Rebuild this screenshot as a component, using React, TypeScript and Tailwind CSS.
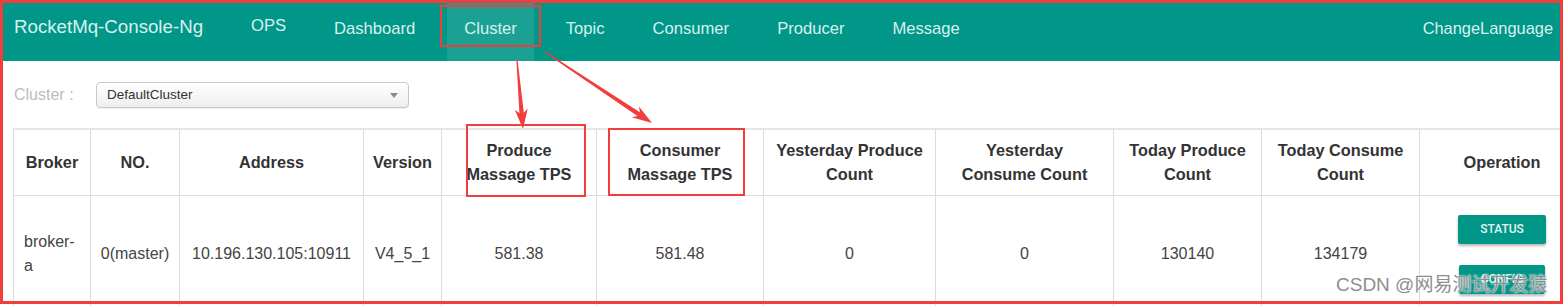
import React from 'react';

const RED = '#f23d3d';

const navItems = [
  { label: 'Dashboard', active: false },
  { label: 'Cluster', active: true },
  { label: 'Topic', active: false },
  { label: 'Consumer', active: false },
  { label: 'Producer', active: false },
  { label: 'Message', active: false },
];

const arrowPoints = (sx: number, sy: number, tx: number, ty: number) => {
  const len = Math.hypot(tx - sx, ty - sy);
  const ux = (tx - sx) / len;
  const uy = (ty - sy) / len;
  const nx = -uy;
  const ny = ux;
  const head = 20;
  const hw = 6.5;
  const bx = tx - ux * head;
  const by = ty - uy * head;
  const jx = bx + ux * 4;
  const jy = by + uy * 4;
  const pts = [
    [sx + nx * 0.6, sy + ny * 0.6],
    [jx + nx * 2.2, jy + ny * 2.2],
    [bx + nx * hw, by + ny * hw],
    [tx, ty],
    [bx - nx * hw, by - ny * hw],
    [jx - nx * 2.2, jy - ny * 2.2],
    [sx - nx * 0.6, sy - ny * 0.6],
  ];
  return pts.map((p) => p.join(',')).join(' ');
};

const Navbar = () => (
  <nav className="flex h-[61px] w-full bg-[#009688] text-[#d9f1ee]">
    <div className="pl-[14px] pt-[17px] text-[18.7px] leading-[20px] whitespace-nowrap">
      RocketMq-Console-Ng
    </div>
    <ul className="ml-[32px] flex gap-[16px]">
      <li className="px-[16px] pt-[16px] text-[16.6px] leading-[20px]">OPS</li>
      {navItems.map((item) => (
        <li
          key={item.label}
          className={
            item.active
              ? 'h-full bg-white/10 px-[17px] pt-[19px] text-[16.6px] leading-[20px]'
              : 'h-full px-[16px] pt-[19px] text-[16.6px] leading-[20px]'
          }
        >
          {item.label}
        </li>
      ))}
    </ul>
    <div className="ml-auto pr-[10px] pt-[18px] text-[16.4px] leading-[20px]">ChangeLanguage</div>
  </nav>
);

const ClusterSelect = () => (
  <div className="mt-[21px] flex items-center">
    <span className="w-[96px] pl-[14px] text-[16px] text-[#bdbdbd]">Cluster :</span>
    <div className="flex h-[26px] w-[313px] items-center justify-between rounded-[4px] border border-[#c8c8c8] bg-linear-to-b from-white to-[#eeeeee] pl-[10px] pr-[10px] shadow-[0_1px_1px_rgba(0,0,0,0.06)]">
      <span className="text-[13.5px] text-[#333]">DefaultCluster</span>
      <svg width="8" height="5" viewBox="0 0 8 5">
        <polygon points="0,0 8,0 4,5" fill="#8a8a8a" />
      </svg>
    </div>
  </div>
);

const Btn = ({ label }: { label: string }) => (
  <button className="h-[29px] rounded-[2px] bg-[#009688] px-[22px] font-['Roboto',sans-serif] text-[12px] font-medium text-[#e6f5f3] shadow-[0_2px_3px_rgba(0,0,0,0.28)]">
    {label}
  </button>
);

const ClusterTable = () => {
  const th = 'border border-[#dddddd] px-[8px] text-center align-middle font-bold text-[16.3px] leading-[24px] text-[#333]';
  const td = 'border border-[#dddddd] px-[8px] text-center align-middle text-[16px] leading-[24px] text-[#444]';
  return (
    <div className="mt-[20px] w-full overflow-hidden pl-[13px]">
      <table className="w-[1571px] table-fixed border-collapse border-t-2 border-[#e6e6e6]">
        <colgroup>
          <col className="w-[77px]" />
          <col className="w-[89px]" />
          <col className="w-[184px]" />
          <col className="w-[78px]" />
          <col className="w-[155px]" />
          <col className="w-[167px]" />
          <col className="w-[172px]" />
          <col className="w-[178px]" />
          <col className="w-[148px]" />
          <col className="w-[158px]" />
          <col className="w-[165px]" />
        </colgroup>
        <thead>
          <tr className="h-[66px]">
            <th className={th}>Broker</th>
            <th className={th}>NO.</th>
            <th className={th}>Address</th>
            <th className={th}>Version</th>
            <th className={th}>Produce<br />Massage TPS</th>
            <th className={th}>Consumer<br />Massage TPS</th>
            <th className={th}>Yesterday Produce<br />Count</th>
            <th className={th}>Yesterday<br />Consume Count</th>
            <th className={th}>Today Produce<br />Count</th>
            <th className={th}>Today Consume<br />Count</th>
            <th className={th}>Operation</th>
          </tr>
        </thead>
        <tbody>
          <tr>
            <td className="border border-[#dddddd] pl-[10px] text-left align-middle text-[16px] leading-[24px] text-[#444]">
              broker-<br />a
            </td>
            <td className={td}>0(master)</td>
            <td className={td}>10.196.130.105:10911</td>
            <td className={td}>V4_5_1</td>
            <td className={td}>581.38</td>
            <td className={td}>581.48</td>
            <td className={td}>0</td>
            <td className={td}>0</td>
            <td className={td}>130140</td>
            <td className={td}>134179</td>
            <td className="border border-[#dddddd] align-middle">
              <div className="flex flex-col items-center gap-[21px] py-[19px]">
                <Btn label="STATUS" />
                <Btn label="CONFIG" />
              </div>
            </td>
          </tr>
        </tbody>
      </table>
    </div>
  );
};

const Annotations = () => (
  <svg
    className="pointer-events-none absolute left-0 top-0"
    width="1563"
    height="306"
    viewBox="0 0 1563 306"
  >
    <rect x="1.5" y="1.5" width="1560" height="301" fill="none" stroke={RED} strokeWidth="3" />
    <rect x="441" y="6" width="99" height="40" fill="none" stroke={RED} strokeWidth="2" />
    <rect x="467" y="125" width="118" height="71" fill="none" stroke={RED} strokeWidth="2" />
    <rect x="609" y="129" width="135" height="66" fill="none" stroke={RED} strokeWidth="2" />
    <polygon points={arrowPoints(517, 60, 523, 129)} fill={RED} />
    <polygon points={arrowPoints(545, 52, 652, 123)} fill={RED} />
  </svg>
);

export default function App() {
  return (
    <div className="relative h-[306px] w-[1563px] overflow-hidden bg-white font-['Liberation_Sans',Arial,sans-serif]">
      <Navbar />
      <ClusterSelect />
      <ClusterTable />
      <Annotations />
      <div className="pointer-events-none absolute left-[1336px] top-[273px] whitespace-nowrap font-['Liberation_Sans','Noto_Sans_CJK_SC',sans-serif] text-[19px] leading-[24px] text-[#8e8e8e] [text-shadow:0_0_2px_#fff,0_0_2px_#fff]">
        CSDN @网易测试开发猿
      </div>
    </div>
  );
}
